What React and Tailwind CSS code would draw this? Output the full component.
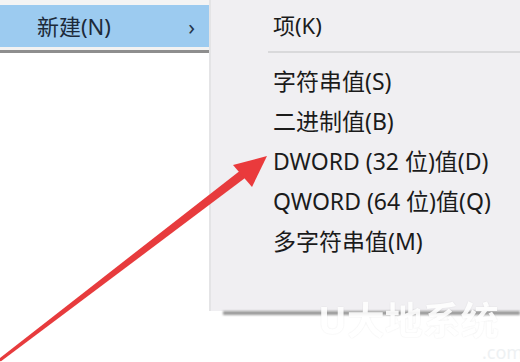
export default function App() {
  const font = { fontFamily: '"Noto Sans", "Noto Sans CJK SC", sans-serif' }
  const items = [
    "字符串值(S)",
    "二进制值(B)",
    "DWORD (32 位)值(D)",
    "QWORD (64 位)值(Q)",
    "多字符串值(M)",
  ]

  return (
    <div className="relative w-[520px] h-[362px] overflow-hidden bg-white flex text-[#1b1b1b]" style={font}>
      {/* Left context menu */}
      <div className="w-[209px] flex flex-col">
        <div className="h-[5px] bg-[#f4f4f4]"></div>
        <div className="h-[42px] bg-[#9ccbf0] flex items-center pl-[37px] pr-[14px]">
          <span className="text-[22px] text-[#1d2a3a] leading-none">新建(N)</span>
          <span className="ml-auto text-[22px] text-[#26364a] leading-none">›</span>
        </div>
        <div className="h-[3px] bg-[#f2f2f2]"></div>
        <div className="h-[3px] bg-[#8e8e8e] blur-[0.6px]"></div>
        <div className="flex-1 bg-white"></div>
      </div>

      {/* Submenu */}
      <div className="flex-1 flex flex-col">
        <div className="h-[311px] bg-[#f0eff2] border-l-2 border-[#e4e4e6] flex flex-col pt-[5px]">
          <div className="h-[40px] flex items-center pl-[62px] text-[22px]">项(K)</div>
          <div className="h-[2px] bg-[#d9d9db] ml-[57px] mt-[6px]"></div>
          <div className="h-[8px]"></div>
          {items.map((t) => (
            <div key={t} className="h-[40px] flex items-center pl-[62px] text-[23px] whitespace-nowrap">
              {t}
            </div>
          ))}
        </div>
        <div className="h-[4px] bg-[#9a9a9a] ml-[14px] blur-[1px]"></div>
        <div className="flex-1 bg-white"></div>
      </div>

      {/* Red arrow */}
      <svg className="absolute inset-0" width="520" height="362" viewBox="0 0 520 362">
        <polygon
          points="0.7,361.5 -0.9,358.7 240.3,170.4 245.7,177.6"
          fill="#e73b3d"
        />
        <polygon points="267,156 233,165 252,187" fill="#ea3a3c" />
      </svg>

      {/* Watermark */}
      <div className="absolute left-[318px] top-[300px] text-[38px] font-bold text-white leading-none whitespace-nowrap opacity-90 [text-shadow:0_0_2px_rgba(0,0,0,0.1)]">
        U大地系统
      </div>
      <div className="absolute left-[482px] top-[343px] text-[18px] text-[#eef1f3] leading-none whitespace-nowrap">.com</div>
    </div>
  )
}
